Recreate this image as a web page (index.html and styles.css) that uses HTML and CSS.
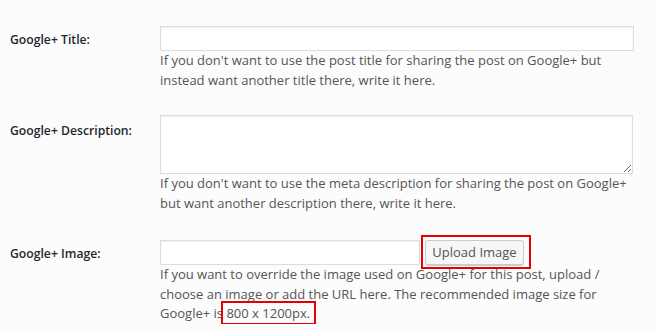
FILE: index.html
```html
<!DOCTYPE html>
<html>
<head>
<meta charset="utf-8">
<link rel="stylesheet" href="styles.css">
</head>
<body>
<div class="form">
  <div class="row row-title">
    <label class="label">Google+ Title:</label>
    <div class="field">
      <input class="text-input full" type="text">
      <p class="description">If you don't want to use the post title for sharing the post on Google+ but instead want another title there, write it here.</p>
    </div>
  </div>
  <div class="row row-desc">
    <label class="label">Google+ Description:</label>
    <div class="field">
      <textarea class="textarea"></textarea>
      <p class="description">If you don't want to use the meta description for sharing the post on Google+ but want another description there, write it here.</p>
    </div>
  </div>
  <div class="row row-image">
    <label class="label">Google+ Image:</label>
    <div class="field">
      <div class="upload-line">
        <input class="text-input short" type="text">
        <span class="highlight-box"><button class="button" type="button">Upload Image</button></span>
      </div>
      <p class="description">If you want to override the image used on Google+ for this post, upload / choose an image or add the URL here. The recommended image size for Google+ is <span class="highlight-text">800 x 1200px.</span></p>
    </div>
  </div>
</div>
</body>
</html>
```
FILE: styles.css
```css
html, body {
  margin: 0;
  padding: 0;
  background: #fcfcfc;
}
body {
  font-family: "Open Sans", "Liberation Sans", sans-serif;
  font-size: 13px;
  color: #444;
}
.form {
  padding-top: 26px;
}
.row {
  display: flex;
  align-items: flex-start;
}
.row-desc {
  margin-top: 25px;
}
.row-image {
  margin-top: 27px;
}
.label {
  width: 150px;
  padding-left: 10px;
  font-size: 12.2px;
  font-weight: 600;
  color: #23282d;
  line-height: 19px;
}
.row-title .label,
.row-image .label {
  padding-top: 4px;
}
.row-desc .label {
  padding-top: 6px;
}
.field {
  width: 474px;
}
.text-input,
.textarea {
  display: block;
  box-sizing: border-box;
  margin: 0;
  background: #fff;
  border: 1px solid #ddd;
  box-shadow: inset 0 1px 2px rgba(0, 0, 0, 0.07);
  font-family: inherit;
  font-size: 13px;
  outline: none;
  border-radius: 0;
}
.text-input {
  height: 25px;
  padding: 2px 5px;
}
.text-input.full {
  width: 474px;
}
.textarea {
  width: 473px;
  height: 59px;
  resize: vertical;
  padding: 2px 5px;
}
.description {
  margin: 0;
  font-size: 13px;
  line-height: 19.5px;
  color: #555;
}
.upload-line {
  display: flex;
  align-items: flex-start;
  height: 25px;
}
.text-input.short {
  width: 260px;
}
.highlight-box {
  display: inline-flex;
  margin-top: -5px;
  margin-left: 1px;
  padding: 3px 5px 2px 2px;
  border: 2px solid #e60000;
  position: relative;
  z-index: 1;
}
.button {
  box-sizing: border-box;
  height: 25px;
  width: 99px;
  margin: 0;
  padding: 0 4px 1px;
  white-space: nowrap;
  font-family: inherit;
  font-size: 13px;
  line-height: 22px;
  text-align: center;
  color: #555;
  background: #f7f7f7;
  border: 1px solid #ccc;
  border-radius: 3px;
  box-shadow: 0 1px 0 #ccc;
  cursor: pointer;
}
.highlight-text {
  padding: 0 3px 0 2px;
  margin: 0 -3px 0 -2px;
  outline: 2px solid #e60000;
  outline-offset: 1px;
}
```
